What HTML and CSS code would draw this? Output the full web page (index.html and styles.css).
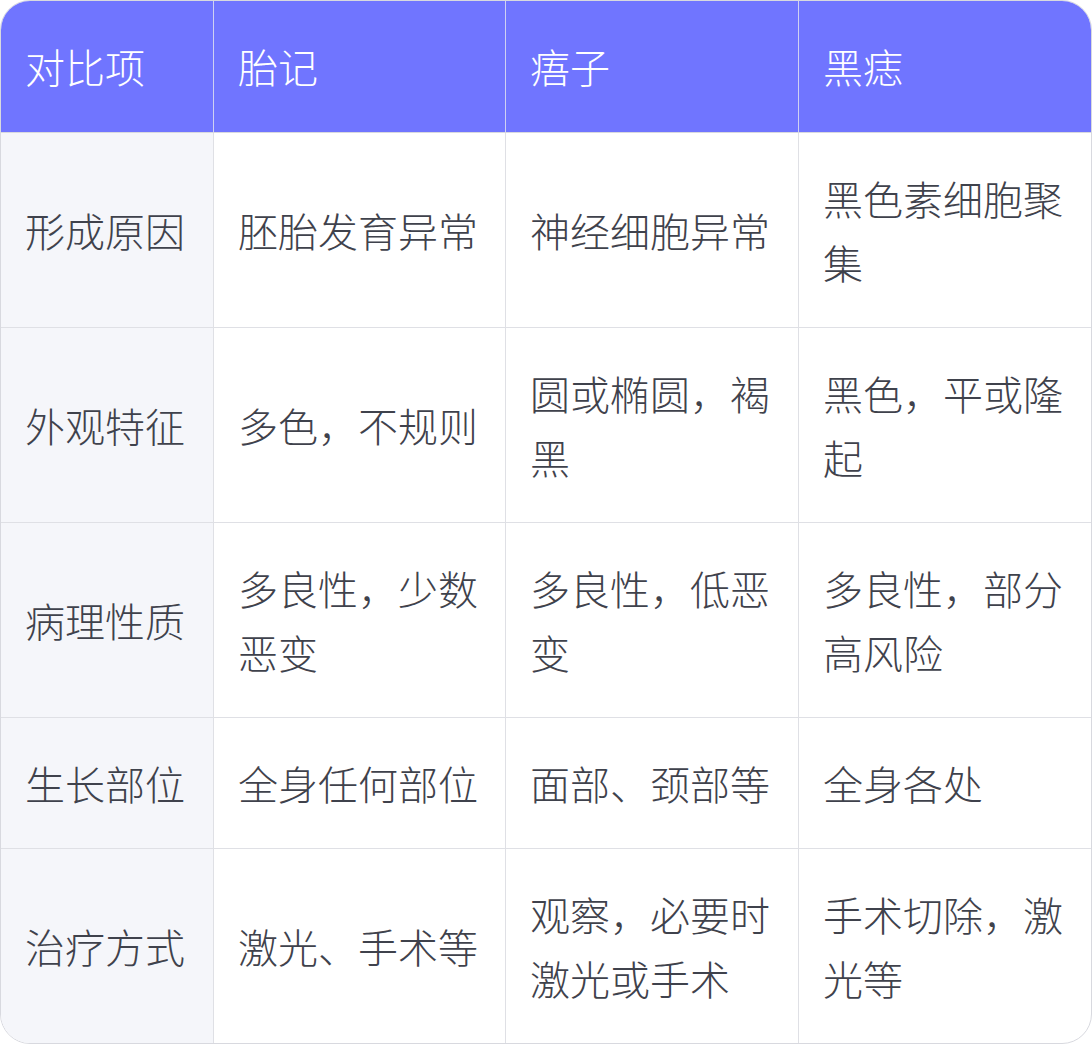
FILE: index.html
```html
<!DOCTYPE html>
<html lang="zh-CN">
<head>
<meta charset="utf-8">
<link rel="stylesheet" href="styles.css">
</head>
<body>
<div class="wrap">
<table class="cmp">
  <colgroup>
    <col class="c1"><col class="c2"><col class="c3"><col class="c4">
  </colgroup>
  <thead>
    <tr><th>对比项</th><th>胎记</th><th>痦子</th><th>黑痣</th></tr>
  </thead>
  <tbody>
    <tr><td>形成原因</td><td>胚胎发育异常</td><td>神经细胞异常</td><td>黑色素细胞聚集</td></tr>
    <tr><td>外观特征</td><td>多色，不规则</td><td>圆或椭圆，褐黑</td><td>黑色，平或隆起</td></tr>
    <tr><td>病理性质</td><td>多良性，少数恶变</td><td>多良性，低恶变</td><td>多良性，部分高风险</td></tr>
    <tr><td>生长部位</td><td>全身任何部位</td><td>面部、颈部等</td><td>全身各处</td></tr>
    <tr><td>治疗方式</td><td>激光、手术等</td><td>观察，必要时激光或手术</td><td>手术切除，激光等</td></tr>
  </tbody>
</table>
</div>
</body>
</html>
```

FILE: styles.css
```css
html, body {
  margin: 0;
  padding: 0;
  background: #ffffff;
}
.wrap {
  width: 1092px;
  box-sizing: border-box;
  border: 1px solid #d8d9df;
  border-radius: 30px;
  overflow: hidden;
}
.cmp {
  width: 100%;
  border-collapse: separate;
  border-spacing: 0;
  table-layout: fixed;
  font-family: "Noto Sans CJK SC", "Noto Sans", sans-serif;
  font-size: 40px;
  font-weight: 300;
  line-height: 64px;
  color: #3f424c;
}
.c1 { width: 213px; }
.c2 { width: 292px; }
.c3 { width: 293px; }
.c4 { width: 292px; }
.cmp th, .cmp td {
  padding: 33px 24px;
  text-align: left;
  vertical-align: middle;
  font-weight: 300;
  border-right: 1px solid #dfe0e5;
  border-bottom: 1px solid #dfe0e5;
}
.cmp th:last-child, .cmp td:last-child { border-right: none; }
.cmp tbody tr:last-child td { border-bottom: none; }
.cmp th {
  padding-bottom: 34px;
  background: #7075ff;
  color: #ffffff;
  border-right-color: #cfd1f2;
  border-bottom-color: #d8d9df;
}
.cmp td:first-child {
  background: #f5f6fa;
}
```
